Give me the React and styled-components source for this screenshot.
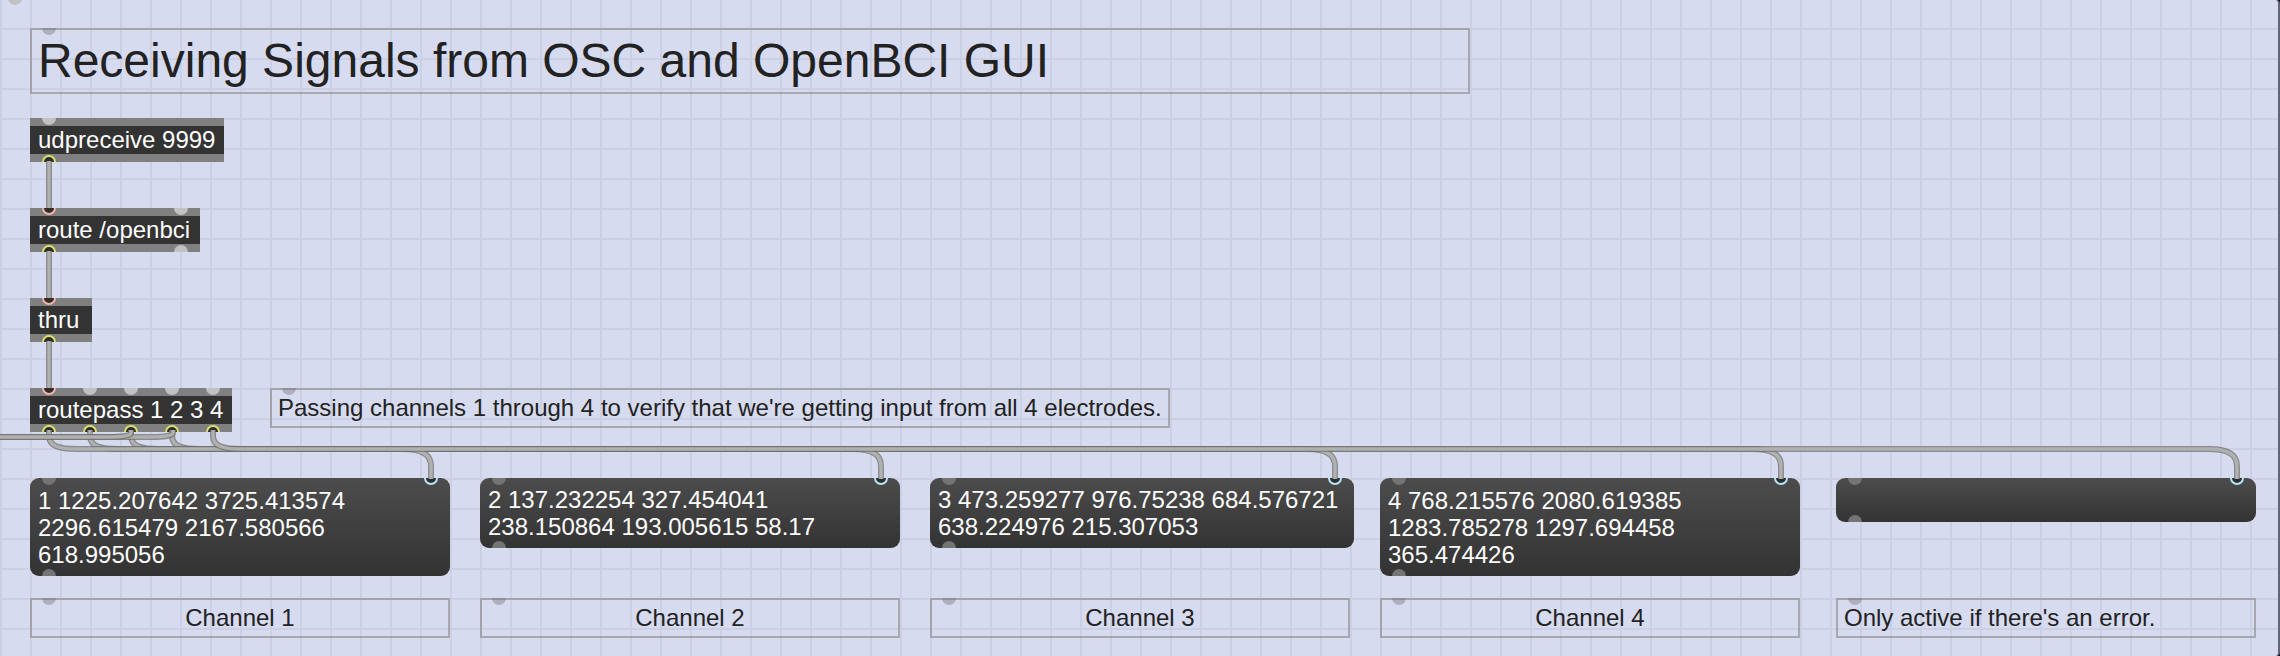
import React from 'react';
import styled, { createGlobalStyle, css } from 'styled-components';

const GlobalStyle = createGlobalStyle`
  *, *::before, *::after { box-sizing: border-box; }
  body {
    margin: 0;
    background: #000;
    font-family: "Liberation Sans", Arial, sans-serif;
  }
`;

const Patcher = styled.main`
  position: relative;
  width: 100%;
  min-height: max(100vh, 640px);
  overflow: hidden;
  border-right: 2px solid #62667c;
  border-radius: 0 4px 4px 0;
  background-color: #d7dbef;
  background-image:
    linear-gradient(to right, #ccd0e4 2px, transparent 2px),
    linear-gradient(to bottom, #ccd0e4 2px, transparent 2px);
  background-size: 30px 30px;
  background-position: 0 28px;
`;

/* A box placed on the free patching canvas. */
const placed = css`
  position: absolute;
  left: ${(p) => p.$x}px;
  top: ${(p) => p.$y}px;
`;

const ObjectBox = styled.section`
  ${placed}
  padding: 0 8px;
  border: solid #808080;
  border-width: 8px 0;
  background: #333;
  color: #fdfdfd;
  font-size: 24px;
  line-height: 28px;
  white-space: nowrap;
  min-width: ${(p) => p.$w}px;
`;

const MessageBox = styled.button`
  ${placed}
  display: block;
  width: ${(p) => p.$w}px;
  min-height: ${(p) => p.$h}px;
  padding: 8px;
  border: 0;
  border-radius: 9px;
  background: linear-gradient(#4c4c4c, #333);
  color: #fdfdfd;
  font-family: inherit;
  font-size: 24px;
  line-height: 27px;
  text-align: left;
  cursor: pointer;
`;

const MessageLine = styled.span`
  display: block;
  white-space: nowrap;
`;

const Comment = styled.p`
  ${placed}
  width: ${(p) => p.$w}px;
  margin: 0;
  padding: 4px 6px;
  border: 2px solid rgba(122, 118, 112, 0.5);
  color: #222;
  font-size: 24px;
  line-height: 28px;
  text-align: ${(p) => (p.$center ? 'center' : 'left')};
  white-space: nowrap;
`;

const Title = styled(Comment).attrs({ as: 'h1' })`
  font-size: 48px;
  font-weight: 400;
  line-height: 54px;
`;

const PortLayer = styled.svg`
  position: absolute;
  left: 0;
  top: 0;
  width: 100%;
  height: 100%;
  overflow: visible;
  pointer-events: none;
`;

const OBJECTS = [
  { text: 'udpreceive 9999', x: 30, y: 118, w: 194 },
  { text: 'route /openbci', x: 30, y: 208, w: 170 },
  { text: 'thru', x: 30, y: 298, w: 62 },
  { text: 'routepass 1 2 3 4', x: 30, y: 388, w: 202 },
];

const MESSAGES = [
  { lines: ['1 1225.207642 3725.413574', '2296.615479 2167.580566', '618.995056'], x: 30, w: 420, h: 98, label: 'Channel 1' },
  { lines: ['2 137.232254 327.454041', '238.150864 193.005615 58.17'], x: 480, w: 420, h: 70, label: 'Channel 2' },
  { lines: ['3 473.259277 976.75238 684.576721', '638.224976 215.307053'], x: 930, w: 424, h: 70, label: 'Channel 3' },
  { lines: ['4 768.215576 2080.619385', '1283.785278 1297.694458', '365.474426'], x: 1380, w: 420, h: 98, label: 'Channel 4' },
  { lines: [], x: 1836, w: 420, h: 44, label: "Only active if there's an error." },
];

const MESSAGE_Y = 478;
const LABEL_Y = 598;
const BUS_Y = 449;

const OUTLETS = [49, 90, 131, 172, 213];

/* Stacking of the five bus cords, bottom to top. */
const CORD_ORDER = [3, 2, 1, 0, 4];

const IDLE = { object: '#c1c1c1', message: '#747474', comment: 'rgba(124, 120, 132, 0.45)' };

function IdlePort({ x, y, kind, outlet }) {
  return <path d={`M${x - 7} ${y}a7 7 0 0 ${outlet ? 1 : 0} 14 0z`} fill={IDLE[kind]} />;
}

function LivePort({ x, y, color, outlet }) {
  const sweep = outlet ? 1 : 0;
  return (
    <g>
      <path d={`M${x - 6} ${y}a6 6 0 0 ${sweep} 12 0z`} fill="#2e2e2e" />
      <path d={`M${x - 6} ${y}a6 6 0 0 ${sweep} 12 0`} fill="none" stroke={color} strokeWidth="2" />
    </g>
  );
}

function Cord({ d }) {
  return (
    <g fill="none">
      <path d={d} stroke="rgba(112, 112, 112, 0.75)" strokeWidth="6" />
      <path d={d} stroke="#b0b0ae" strokeWidth="3.4" />
    </g>
  );
}

const busCord = (from, to) =>
  `M${from} 430V436C${from} 446 ${from + 10} ${BUS_Y} ${from + 28} ${BUS_Y}H${to - 28}C${to - 8} ${BUS_Y} ${to} 455 ${to} 466V479`;

export default function App() {
  return (
    <>
      <GlobalStyle />
      <Patcher>
        <Title $x={30} $y={28} $w={1440}>Receiving Signals from OSC and OpenBCI GUI</Title>

        {OBJECTS.map((o) => (
          <ObjectBox key={o.text} $x={o.x} $y={o.y} $w={o.w}>{o.text}</ObjectBox>
        ))}

        <Comment $x={270} $y={388} $w={900}>
          Passing channels 1 through 4 to verify that we're getting input from all 4 electrodes.
        </Comment>

        {MESSAGES.map((m) => (
          <React.Fragment key={m.label}>
            <MessageBox type="button" aria-label={m.lines.length ? undefined : 'Empty message'} $x={m.x} $y={MESSAGE_Y} $w={m.w} $h={m.h}>
              {m.lines.map((line) => <MessageLine key={line}>{line}</MessageLine>)}
            </MessageBox>
            <Comment $x={m.x} $y={LABEL_Y} $w={420} $center={m.lines.length > 0}>{m.label}</Comment>
          </React.Fragment>
        ))}

        <PortLayer aria-hidden="true">
          <circle cx="15" cy="-2" r="7" fill="#c1c1c1" />
          <IdlePort x={49} y={28} kind="comment" />
          <IdlePort x={289} y={388} kind="comment" />
          <IdlePort x={49} y={118} kind="object" />
          <IdlePort x={181} y={208} kind="object" />
          <IdlePort x={181} y={252} kind="object" outlet />
          {OUTLETS.slice(1).map((x) => <IdlePort key={x} x={x} y={388} kind="object" />)}
          {[208, 298, 388].map((y) => <LivePort key={y} x={49} y={y} color="#f3b3a4" />)}
          {[162, 252, 342].map((y) => <LivePort key={y} x={49} y={y} color="#d9e266" outlet />)}
          {OUTLETS.map((x) => <LivePort key={x} x={x} y={432} color="#d9e266" outlet />)}
          {MESSAGES.map((m) => (
            <g key={m.label}>
              <IdlePort x={m.x + 19} y={MESSAGE_Y} kind="message" />
              <IdlePort x={m.x + 19} y={MESSAGE_Y + m.h} kind="message" outlet />
              <IdlePort x={m.x + 19} y={LABEL_Y} kind="comment" />
              <LivePort x={m.x + m.w - 19} y={MESSAGE_Y} color="#b2e6f4" />
            </g>
          ))}
          {[161, 251, 341].map((y) => <Cord key={y} d={`M49 ${y}V${y + 47}`} />)}
          {CORD_ORDER.map((i) => (
            <Cord key={i} d={busCord(OUTLETS[i], MESSAGES[i].x + MESSAGES[i].w - 19)} />
          ))}
          <Cord d="M173 430V433Q173 437 150 437H-4" />
          <Cord d="M131 430V433Q131 437 108 437H-4" />
        </PortLayer>
      </Patcher>
    </>
  );
}
